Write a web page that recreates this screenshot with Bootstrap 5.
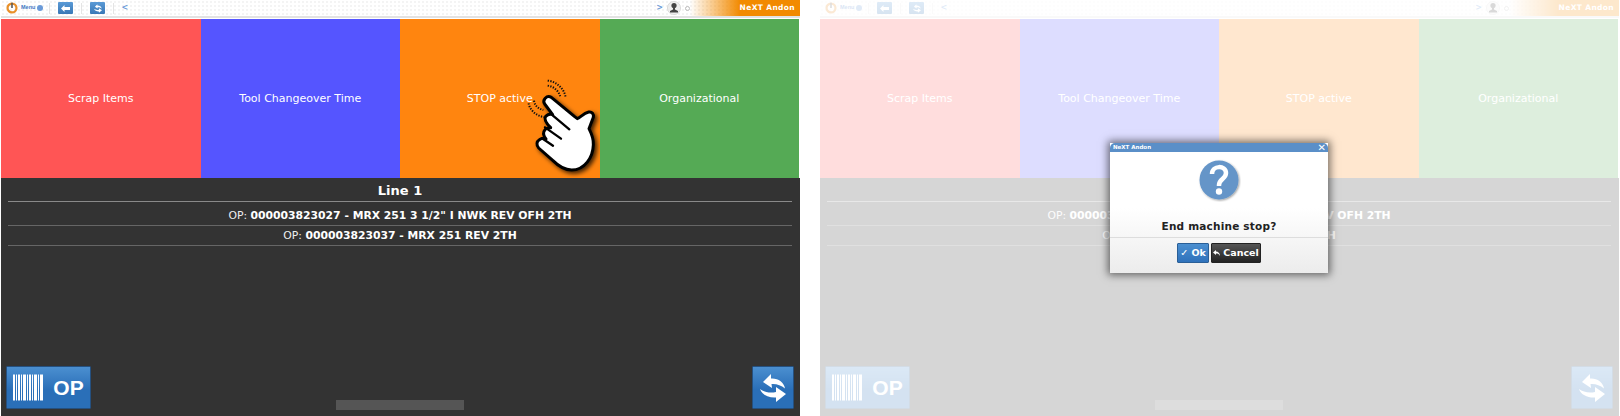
<!DOCTYPE html>
<html lang="en">
<head>
<meta charset="UTF-8">
<title>NeXT Andon</title>
<link rel="stylesheet" href="https://cdn.jsdelivr.net/npm/bootstrap@5.3.0/dist/css/bootstrap.min.css">
<style>
html, body { height: 416px; overflow: hidden; background: #fff; }
body { font-family: "DejaVu Sans", sans-serif; }
.stage { width: 1619px; }
.screen { width: 800px; height: 416px; }
.topbar { height: 19px; flex: none; padding: 0 0 1px 1px; background: #fff; }
.topbar-in { height: 100%; border-bottom: 2px solid #e2e2e2; padding-left: 5px;
  background-color: #fff; background-image: radial-gradient(#f4f4f4 1px, transparent 1px); background-size: 4px 4px; }
.menu-lbl { font: 700 5.5px "Liberation Sans", sans-serif; color: #3f78c4; margin-left: 3px; line-height: 1; }
.menu-dot { width: 6px; height: 6px; border-radius: 50%; background: #6a9ad8; margin-left: 2px; }
.sep { width: 1px; height: 11px; background: #e4e4e4; }
.sep-a { margin-left: 6px; }
.sep-b, .sep-c { margin-left: 8px; }
.bar-btn { width: 15px; height: 12px; margin-left: 8px; border-radius: 1px; padding: 0;
  background: linear-gradient(#5a9ad6, #3a78b6); }
.bar-arrow { font-size: 8px; font-weight: 700; color: #6a9ad8; line-height: 1; }
.arrow-l { margin-left: 7px; }
.avatar-dot { width: 5px; height: 5px; border: 1px solid #bbb; border-radius: 50%; margin: 0 0 0 4px; }
.brand { width: 110px; height: 100%; padding-right: 5px; font-size: 7.5px; font-weight: 700;
  letter-spacing: .35px; color: #fff; line-height: 1;
  background: linear-gradient(90deg, rgba(242,138,0,0) 0, #f28a00 50px); }
.tiles { height: 159px; flex: none; padding: 0 1px; }
.tile { font-size: 11px; color: #fff; padding-top: 1px; }
.t-red { background: #ff5555; }
.t-blue { background: #5555ff; }
.t-orange { background: #ff850f; }
.t-green { background: #55aa55; }
.work { background: #333; color: #fff; padding: 0 8px 0 7px; margin-left: 1px; }
.line-ttl { height: 24px; font-size: 13px; font-weight: 700; border-bottom: 1px solid #8a8a8a; line-height: 25px; }
.op-row { height: 20px; font-size: 10.8px; line-height: 19px; color: #eee; border-bottom: 1px solid #666; }
.op-first { height: 24px; padding-top: 4px; }
.op-row b { color: #fff; }
.action { height: 43px; padding: 0; border: 1px solid #25507f; border-radius: 1px; color: #fff;
  background: linear-gradient(#4b8fd0, #2a6fb8 55%); }
.act-op { width: 85px; margin-left: -2px; margin-bottom: 7px; }
.act-op span { font: 700 21px "Liberation Sans", sans-serif; margin-left: 10px; }
.act-sync { width: 42px; margin-right: -2px; margin-bottom: 7px; }
.foot { bottom: 6px; left: 335px; width: 128px; height: 10px; background: #555; }
.tap { left: 500px; top: 70px; width: 130px; height: 120px; pointer-events: none; }
.veil { inset: 0; background: rgba(255,255,255,.8); }
.dialog { width: 218px; height: 130px; background: linear-gradient(#fff 50%, #ececec); border: 0; border-radius: 0;
  box-shadow: 0 0 8px 2px rgba(0,0,0,.55); }
.dlg-head { height: 9px; flex: none; background: #5a8fc8; color: #fff; font-size: 5.5px; font-weight: 700; padding: 0 2px 0 3px; line-height: 1; border-radius: 0; border: 0; }
.dlg-x { font-size: 10px; font-weight: 700; line-height: 1; }
.dlg-msg { font-size: 10.5px; font-weight: 700; color: #222; letter-spacing: .2px; height: 18px; }
.dlg-foot { border-top: 1px solid #ddd; height: 36px; padding-top: 5px; gap: 2px; }
.dlg-btn { height: 20px; padding: 0; font-size: 9.5px; font-weight: 700; color: #fff; border-radius: 1px; border: 1px solid #2a5f97; line-height: 1; white-space: nowrap; }
.b-ok { width: 32px; background: linear-gradient(#4b8fd0, #2f72bb); }
.b-cancel { width: 50px; background: linear-gradient(#555, #222); border-color: #222; }
.b-cancel svg { margin-right: 3px; }
.ico-q { width: 44px; height: 44px; margin-top: 6px; }
</style>
</head>
<body>
<svg width="0" height="0" class="position-absolute">
  <symbol id="i-barcode" viewBox="0 0 30 26">
    <path fill="#fff" d="M0 0h2v26H0zM3 0h1v26H3zM5 0h2v26H5zM8 0h1v26H8zM10 0h3v26h-3zM14 0h1v26h-1zM16 0h2v26h-2zM19 0h1v26h-1zM21 0h3v26h-3zM25 0h1v26h-1zM27 0h3v26h-3z"/>
  </symbol>
  <symbol id="i-sync" viewBox="0 0 26 28">
    <path fill="#fff" d="M3 8 11 0v4.500c7-.5 13 3.500 14 10-4-3.500-9-5-13.500-4.500L12 14zM26 20l-10 8v-4.500c-7 .5-14-2.500-16-8.500 4 3 10 4.500 16 3v-5z"/>
  </symbol>
  <symbol id="i-user" viewBox="0 0 14 14">
    <circle cx="7" cy="7" r="6.600" fill="#eee" stroke="#ccc" stroke-width=".6"/>
    <circle cx="7" cy="4.500" r="2.600" fill="#444"/><path fill="#444" d="M6 6.500h2v2l3 1.500v1.500H3V10l3-1.500z"/>
  </symbol>
  <symbol id="i-power" viewBox="0 0 14 14">
    <circle cx="7" cy="7" r="5.200" fill="none" stroke="#e8902a" stroke-width="2.600"/>
    <path stroke="#555" stroke-width="1.800" d="M7 1v6"/>
  </symbol>
</svg>

<div class="stage d-flex justify-content-between">

  <section class="screen d-flex flex-column position-relative">
    <div class="topbar">
      <div class="topbar-in d-flex align-items-center">
        <svg width="12" height="12"><use href="#i-power"/></svg>
        <span class="menu-lbl">Menu</span><span class="menu-dot"></span>
        <span class="sep sep-a"></span>
        <span class="bar-btn d-flex align-items-center justify-content-center"><svg width="9" height="7" viewBox="0 0 9 7"><path fill="#fff" d="M0 3.500 3.500 0v2H9v3H3.500v2z"/></svg></span>
        <span class="sep sep-b"></span>
        <span class="bar-btn d-flex align-items-center justify-content-center"><svg width="8" height="9"><use href="#i-sync"/></svg></span>
        <span class="sep sep-c"></span>
        <span class="bar-arrow arrow-l">&lt;</span>
        <span class="bar-arrow ms-auto">&gt;</span>
        <svg class="ms-1" width="14" height="14"><use href="#i-user"/></svg>
        <span class="avatar-dot"></span>
        <span class="brand d-flex align-items-center justify-content-end">NeXT Andon</span>
      </div>
    </div>
    <div class="tiles row g-0">
      <div class="col-3 tile t-red d-flex align-items-center justify-content-center">Scrap Items</div>
      <div class="col-3 tile t-blue d-flex align-items-center justify-content-center">Tool Changeover Time</div>
      <div class="col-3 tile t-orange d-flex align-items-center justify-content-center">STOP active</div>
      <div class="col-3 tile t-green d-flex align-items-center justify-content-center">Organizational</div>
    </div>
    <div class="work flex-grow-1 d-flex flex-column text-center position-relative">
      <div class="line-ttl">Line 1</div>
      <div class="op-row op-first">OP: <b>000003823027 - MRX 251 3 1/2" I NWK REV OFH 2TH</b></div>
      <div class="op-row">OP: <b>000003823037 - MRX 251 REV 2TH</b></div>
      <div class="mt-auto d-flex justify-content-between">
        <button class="btn action act-op d-flex align-items-center justify-content-center"><svg width="30" height="27"><use href="#i-barcode"/></svg><span>OP</span></button>
        <button class="btn action act-sync d-flex align-items-center justify-content-center"><svg width="26" height="28"><use href="#i-sync"/></svg></button>
      </div>
      <div class="foot position-absolute"></div>
    </div>
    <!-- hand cursor over the STOP tile -->
    <svg class="tap position-absolute" viewBox="0 0 390 360">
      <defs><filter id="hand-sh"><feDropShadow dx="7" dy="7" stdDeviation="7" flood-color="#000" flood-opacity=".75"/></filter></defs>
      <g fill="none" stroke="#111" stroke-width="6" stroke-dasharray="4 4">
        <path d="M143 32c26 2 50 24 54 50"/><path d="M143 47c18 2 34 16 38 34"/>
        <path d="M86 100c2 18 22 38 46 41"/><path d="M102 92c2 14 12 24 28 28"/>
      </g>
      <path filter="url(#hand-sh)" fill="#fff" stroke="#000" stroke-width="9" stroke-linejoin="round" d="M134 102c-8-12 6-28 20-20l70 58 8 6c10-4 18-16 34-20 10-2 16 6 14 16l-13 34c6 12 14 32 13 48-1 38-26 76-65 76-26 0-42-14-56-28l-43-38c-8-8-6-20 2-25 6-4 14-5 20-2-8-10-10-20-3-28 4-5 12-6 17-6-12-12-22-24-15-34 6-6 14-8 21-5z"/>
      <path fill="none" stroke="#000" stroke-width="7" stroke-linecap="round" d="M158 136l50 42M135 172l48 34M126 205l33 22"/>
    </svg>
  </section>

  <section class="screen d-flex flex-column position-relative">
    <div class="topbar">
      <div class="topbar-in d-flex align-items-center">
        <svg width="12" height="12"><use href="#i-power"/></svg>
        <span class="menu-lbl">Menu</span><span class="menu-dot"></span>
        <span class="sep sep-a"></span>
        <span class="bar-btn d-flex align-items-center justify-content-center"><svg width="9" height="7" viewBox="0 0 9 7"><path fill="#fff" d="M0 3.500 3.500 0v2H9v3H3.500v2z"/></svg></span>
        <span class="sep sep-b"></span>
        <span class="bar-btn d-flex align-items-center justify-content-center"><svg width="8" height="9"><use href="#i-sync"/></svg></span>
        <span class="sep sep-c"></span>
        <span class="bar-arrow arrow-l">&lt;</span>
        <span class="bar-arrow ms-auto">&gt;</span>
        <svg class="ms-1" width="14" height="14"><use href="#i-user"/></svg>
        <span class="avatar-dot"></span>
        <span class="brand d-flex align-items-center justify-content-end">NeXT Andon</span>
      </div>
    </div>
    <div class="tiles row g-0">
      <div class="col-3 tile t-red d-flex align-items-center justify-content-center">Scrap Items</div>
      <div class="col-3 tile t-blue d-flex align-items-center justify-content-center">Tool Changeover Time</div>
      <div class="col-3 tile t-orange d-flex align-items-center justify-content-center">STOP active</div>
      <div class="col-3 tile t-green d-flex align-items-center justify-content-center">Organizational</div>
    </div>
    <div class="work flex-grow-1 d-flex flex-column text-center position-relative">
      <div class="line-ttl">Line 1</div>
      <div class="op-row op-first">OP: <b>000003823027 - MRX 251 3 1/2" I NWK REV OFH 2TH</b></div>
      <div class="op-row">OP: <b>000003823037 - MRX 251 REV 2TH</b></div>
      <div class="mt-auto d-flex justify-content-between">
        <button class="btn action act-op d-flex align-items-center justify-content-center"><svg width="30" height="27"><use href="#i-barcode"/></svg><span>OP</span></button>
        <button class="btn action act-sync d-flex align-items-center justify-content-center"><svg width="26" height="28"><use href="#i-sync"/></svg></button>
      </div>
      <div class="foot position-absolute"></div>
    </div>
    <div class="veil position-absolute d-flex align-items-center justify-content-center">
      <div class="dialog card">
        <div class="dlg-head card-header d-flex align-items-center justify-content-between"><span>NeXT Andon</span><span class="dlg-x">&#10005;</span></div>
        <div class="card-body p-0 d-flex flex-column align-items-center">
          <svg class="ico-q" viewBox="0 0 44 44">
            <defs><filter id="q-sh"><feDropShadow dx="1" dy="1" stdDeviation="1" flood-opacity=".4"/></filter></defs>
            <circle cx="22" cy="22" r="19.500" fill="#6595c8" filter="url(#q-sh)"/>
            <path fill="none" stroke="#fff" stroke-width="4.500" d="M15 16c0-9 14-9 14-1 0 6-7 6-7 12v1"/>
            <circle cx="22" cy="33.500" r="3.200" fill="#fff"/>
          </svg>
          <div class="dlg-msg mt-auto">End machine stop?</div>
          <div class="dlg-foot w-100 d-flex justify-content-center">
            <button class="btn dlg-btn b-ok d-flex align-items-center justify-content-center">&#10003;&nbsp;Ok</button>
            <button class="btn dlg-btn b-cancel d-flex align-items-center justify-content-center"><svg width="7" height="6" viewBox="0 0 7 6"><path fill="#fff" d="M0 2.500 3 0v1.500c2 0 4 1.500 4 4.500C6 4 5 3.500 3 3.500V5z"/></svg>Cancel</button>
          </div>
        </div>
      </div>
    </div>
  </section>

</div>
<script src="https://cdn.jsdelivr.net/npm/bootstrap@5.3.0/dist/js/bootstrap.bundle.min.js"></script>
</body>
</html>
